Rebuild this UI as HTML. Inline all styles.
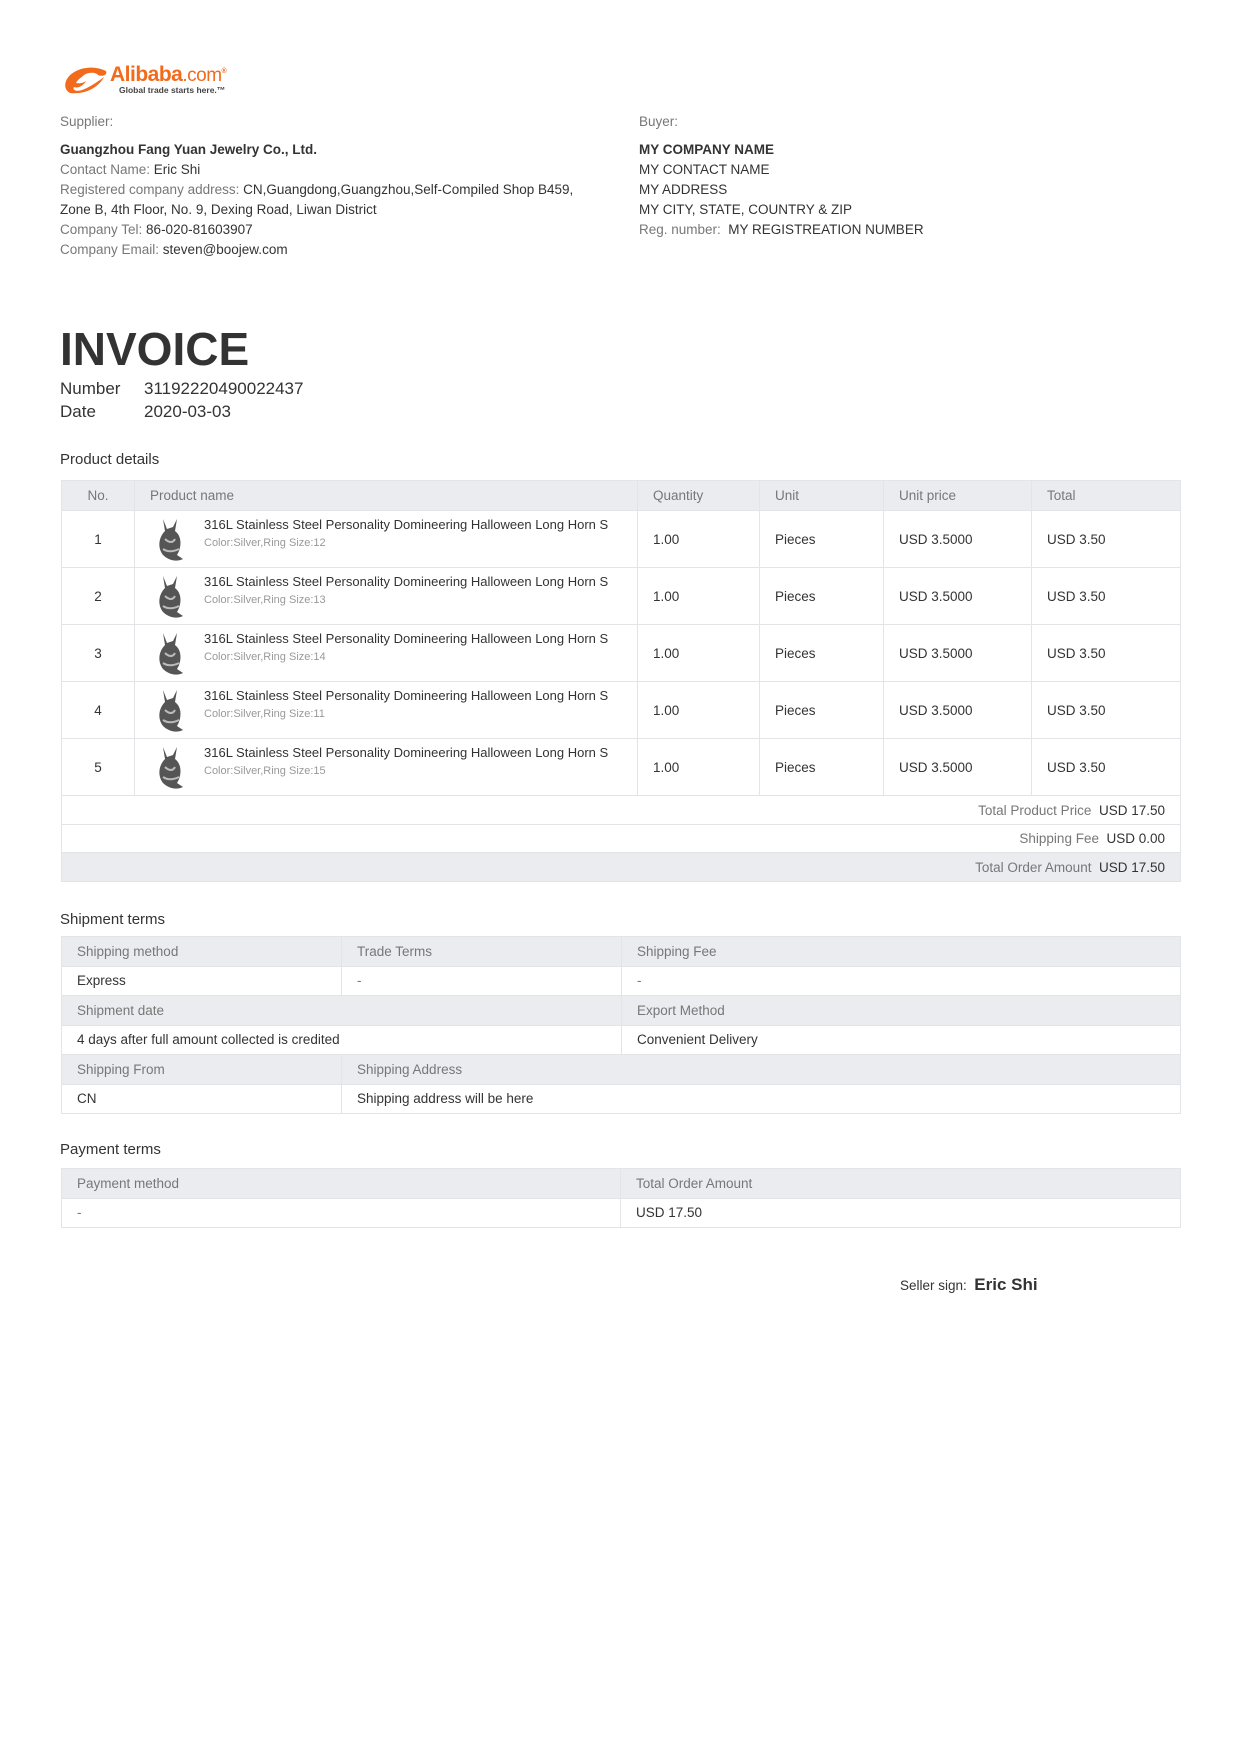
<!DOCTYPE html>
<html><head><meta charset="utf-8"><style>
*{margin:0;padding:0;box-sizing:border-box}
body{width:1240px;height:1754px;background:#fff;font-family:"Liberation Sans","DejaVu Sans",sans-serif;color:#333;position:relative;overflow:hidden}
.a{position:absolute;white-space:nowrap}
.l{color:#777}
.info{font-size:13.5px;line-height:20px}
table{border-collapse:collapse;position:absolute;left:61px;width:1119px;font-size:13.5px;table-layout:fixed}
td{border:1px solid #e3e4e8;padding:0 15px;vertical-align:middle}
.h td{background:#ebecf0;color:#777}
.pt tr.r td{height:57px}
.pt tr.h td{height:30px}
.st td{height:29.5px}
.tt{padding-left:54px;margin-top:-12px;white-space:nowrap;overflow:hidden;font-size:13px}
.cc{padding-left:54px;font-size:11px;color:#999;margin-top:5px}
</style></head><body>

<div class="a" style="left:62px;top:63px;width:160px;height:34px">
<svg width="50" height="34" viewBox="0 0 50 34"><path d="M8 30 C0 26 2 14 14 8 C24 3 36 4 44 8 C46 12 40 14 36 12 C34 9 26 9 22 12 C19 15 16 16 14 20 C20 21 22 19 24 18 C22 22 16 26 12 24 C10 27 14 29 20 27 C26 25 34 20 42 14 C38 22 26 32 8 30 Z" fill="#f26a1b"/></svg>
<span class="a" style="left:48px;top:0;font-size:21px;font-weight:bold;color:#f26a1b;letter-spacing:-0.5px">Alibaba<span style="font-weight:normal;font-size:19px">.com</span><sup style="font-size:7px">®</sup></span>
<span class="a" style="left:57px;top:22px;font-size:8.5px;color:#444;font-weight:bold">Global trade starts here.™</span>
</div>

<div class="a info" style="left:60px;top:112px">
<div class="l">Supplier:</div>
<div style="margin-top:8px;font-weight:bold">Guangzhou Fang Yuan Jewelry Co., Ltd.</div>
<div><span class="l">Contact Name: </span>Eric Shi</div>
<div><span class="l">Registered company address: </span>CN,Guangdong,Guangzhou,Self-Compiled Shop B459,</div>
<div>Zone B, 4th Floor, No. 9, Dexing Road, Liwan District</div>
<div><span class="l">Company Tel: </span>86-020-81603907</div>
<div><span class="l">Company Email: </span>steven@boojew.com</div>
</div>

<div class="a info" style="left:639px;top:112px">
<div class="l">Buyer:</div>
<div style="margin-top:8px;font-weight:bold">MY COMPANY NAME</div>
<div>MY CONTACT NAME</div>
<div>MY ADDRESS</div>
<div>MY CITY, STATE, COUNTRY &amp; ZIP</div>
<div><span class="l">Reg. number: </span>&nbsp;MY REGISTREATION NUMBER</div>
</div>

<div class="a" style="left:60px;top:322px;font-size:46px;font-weight:bold;color:#333">INVOICE</div>
<div class="a" style="left:60px;top:379px;font-size:17px">Number</div>
<div class="a" style="left:144px;top:379px;font-size:17px">31192220490022437</div>
<div class="a" style="left:60px;top:402px;font-size:17px">Date</div>
<div class="a" style="left:144px;top:402px;font-size:17px">2020-03-03</div>

<div class="a" style="left:60px;top:451px;font-size:15px">Product details</div>

<table class="pt" style="top:480px">
<colgroup><col style="width:73px"><col style="width:503px"><col style="width:122px"><col style="width:124px"><col style="width:148px"><col style="width:149px"></colgroup>
<tr class="h"><td style="text-align:center">No.</td><td>Product name</td><td>Quantity</td><td>Unit</td><td>Unit price</td><td>Total</td></tr>
<tr class="r"><td style="text-align:center">1</td><td style="position:relative"><svg style="position:absolute;left:16px;top:6px" width="40" height="46" viewBox="0 0 40 46"><path d="M12 2 L16 12 L22 10 L26 2 L24 14 C32 20 30 32 26 38 L32 42 C24 46 16 42 12 38 C6 30 8 20 14 14 Z" fill="#555"/><path d="M14 22 C18 26 22 26 24 22 M12 32 C18 36 24 34 28 32" stroke="#bbb" stroke-width="2" fill="none"/></svg><div class="tt">316L Stainless Steel Personality Domineering Halloween Long Horn S</div><div class="cc">Color:Silver,Ring Size:12</div></td><td>1.00</td><td>Pieces</td><td>USD 3.5000</td><td>USD 3.50</td></tr>
<tr class="r"><td style="text-align:center">2</td><td style="position:relative"><svg style="position:absolute;left:16px;top:6px" width="40" height="46" viewBox="0 0 40 46"><path d="M12 2 L16 12 L22 10 L26 2 L24 14 C32 20 30 32 26 38 L32 42 C24 46 16 42 12 38 C6 30 8 20 14 14 Z" fill="#555"/><path d="M14 22 C18 26 22 26 24 22 M12 32 C18 36 24 34 28 32" stroke="#bbb" stroke-width="2" fill="none"/></svg><div class="tt">316L Stainless Steel Personality Domineering Halloween Long Horn S</div><div class="cc">Color:Silver,Ring Size:13</div></td><td>1.00</td><td>Pieces</td><td>USD 3.5000</td><td>USD 3.50</td></tr>
<tr class="r"><td style="text-align:center">3</td><td style="position:relative"><svg style="position:absolute;left:16px;top:6px" width="40" height="46" viewBox="0 0 40 46"><path d="M12 2 L16 12 L22 10 L26 2 L24 14 C32 20 30 32 26 38 L32 42 C24 46 16 42 12 38 C6 30 8 20 14 14 Z" fill="#555"/><path d="M14 22 C18 26 22 26 24 22 M12 32 C18 36 24 34 28 32" stroke="#bbb" stroke-width="2" fill="none"/></svg><div class="tt">316L Stainless Steel Personality Domineering Halloween Long Horn S</div><div class="cc">Color:Silver,Ring Size:14</div></td><td>1.00</td><td>Pieces</td><td>USD 3.5000</td><td>USD 3.50</td></tr>
<tr class="r"><td style="text-align:center">4</td><td style="position:relative"><svg style="position:absolute;left:16px;top:6px" width="40" height="46" viewBox="0 0 40 46"><path d="M12 2 L16 12 L22 10 L26 2 L24 14 C32 20 30 32 26 38 L32 42 C24 46 16 42 12 38 C6 30 8 20 14 14 Z" fill="#555"/><path d="M14 22 C18 26 22 26 24 22 M12 32 C18 36 24 34 28 32" stroke="#bbb" stroke-width="2" fill="none"/></svg><div class="tt">316L Stainless Steel Personality Domineering Halloween Long Horn S</div><div class="cc">Color:Silver,Ring Size:11</div></td><td>1.00</td><td>Pieces</td><td>USD 3.5000</td><td>USD 3.50</td></tr>
<tr class="r"><td style="text-align:center">5</td><td style="position:relative"><svg style="position:absolute;left:16px;top:6px" width="40" height="46" viewBox="0 0 40 46"><path d="M12 2 L16 12 L22 10 L26 2 L24 14 C32 20 30 32 26 38 L32 42 C24 46 16 42 12 38 C6 30 8 20 14 14 Z" fill="#555"/><path d="M14 22 C18 26 22 26 24 22 M12 32 C18 36 24 34 28 32" stroke="#bbb" stroke-width="2" fill="none"/></svg><div class="tt">316L Stainless Steel Personality Domineering Halloween Long Horn S</div><div class="cc">Color:Silver,Ring Size:15</div></td><td>1.00</td><td>Pieces</td><td>USD 3.5000</td><td>USD 3.50</td></tr>
<tr><td colspan="6" style="height:29px;text-align:right"><span class="l">Total Product Price</span>&nbsp; USD 17.50</td></tr>
<tr><td colspan="6" style="height:28px;text-align:right"><span class="l">Shipping Fee</span>&nbsp; USD 0.00</td></tr>
<tr><td colspan="6" style="height:29px;text-align:right;background:#ebecf0"><span class="l">Total Order Amount</span>&nbsp; USD 17.50</td></tr>
</table>

<div class="a" style="left:60px;top:911px;font-size:15px">Shipment terms</div>
<table class="st" style="top:936px">
<colgroup><col style="width:280px"><col style="width:280px"><col style="width:559px"></colgroup>
<tr class="h"><td>Shipping method</td><td>Trade Terms</td><td>Shipping Fee</td></tr>
<tr><td>Express</td><td class="l">-</td><td class="l">-</td></tr>
<tr class="h"><td colspan="2">Shipment date</td><td>Export Method</td></tr>
<tr><td colspan="2">4 days after full amount collected is credited</td><td>Convenient Delivery</td></tr>
<tr class="h"><td>Shipping From</td><td colspan="2">Shipping Address</td></tr>
<tr><td>CN</td><td colspan="2">Shipping address will be here</td></tr>
</table>

<div class="a" style="left:60px;top:1141px;font-size:15px">Payment terms</div>
<table class="st" style="top:1168px">
<colgroup><col style="width:559px"><col style="width:560px"></colgroup>
<tr class="h"><td>Payment method</td><td>Total Order Amount</td></tr>
<tr><td class="l">-</td><td>USD 17.50</td></tr>
</table>

<div class="a" style="left:900px;top:1275px;font-size:13.5px">Seller sign: &nbsp;<span style="font-size:17px;font-weight:bold">Eric Shi</span></div>
</body></html>
